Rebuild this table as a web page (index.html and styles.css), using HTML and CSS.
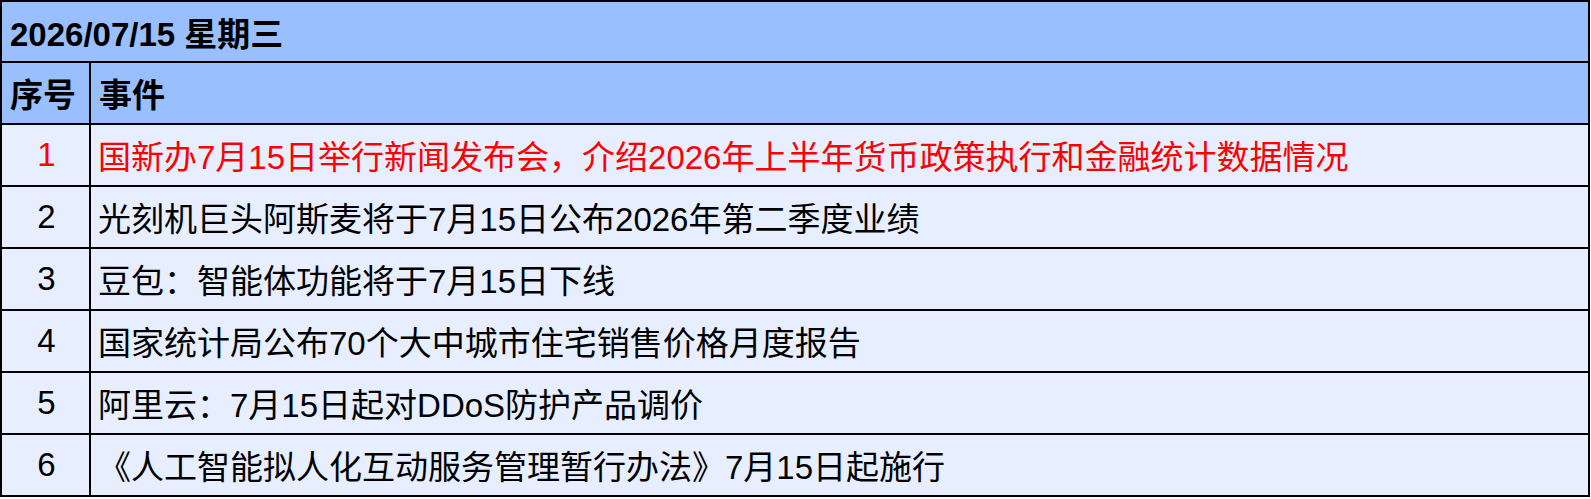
FILE: index.html
```html
<!DOCTYPE html>
<html lang="zh-CN">
<head>
<meta charset="utf-8">
<title>2026/07/15 星期三</title>
<link rel="stylesheet" href="styles.css">
</head>
<body>
<table class="events">
  <thead>
    <tr class="title-row"><th colspan="2" class="title">2026/07/15 星期三</th></tr>
    <tr class="head-row"><th class="num-h">序号</th><th class="evt-h">事件</th></tr>
  </thead>
  <tbody>
    <tr class="hot"><td class="num">1</td><td class="evt">国新办7月15日举行新闻发布会，介绍2026年上半年货币政策执行和金融统计数据情况</td></tr>
    <tr><td class="num">2</td><td class="evt">光刻机巨头阿斯麦将于7月15日公布2026年第二季度业绩</td></tr>
    <tr><td class="num">3</td><td class="evt">豆包：智能体功能将于7月15日下线</td></tr>
    <tr><td class="num">4</td><td class="evt">国家统计局公布70个大中城市住宅销售价格月度报告</td></tr>
    <tr><td class="num">5</td><td class="evt">阿里云：7月15日起对DDoS防护产品调价</td></tr>
    <tr><td class="num">6</td><td class="evt">《人工智能拟人化互动服务管理暂行办法》7月15日起施行</td></tr>
  </tbody>
</table>
</body>
</html>
```
FILE: styles.css
```css
html, body {
  margin: 0;
  padding: 0;
  background: #ffffff;
}
.events {
  border-collapse: collapse;
  width: 1590px;
  font-family: "Liberation Sans", "Noto Sans CJK SC", sans-serif;
  font-size: 33px;
  color: #000;
  border: 2px solid #000;
}
.events th,
.events td {
  border: 2px solid #000;
  padding: 0 8px;
  white-space: nowrap;
}
.events th {
  background: #99bfff;
  text-align: left;
  font-weight: bold;
}
.title-row th { height: 59px; }
.head-row th { height: 60px; }
.events td {
  background: #e6eeff;
  height: 60px;
}
.num-h { width: 71px; }
.events td.num {
  text-align: center;
  padding: 0 0 0 2px;
}
.events td.evt { padding-left: 7px; }
.hot td { color: #ff0000; }
```
